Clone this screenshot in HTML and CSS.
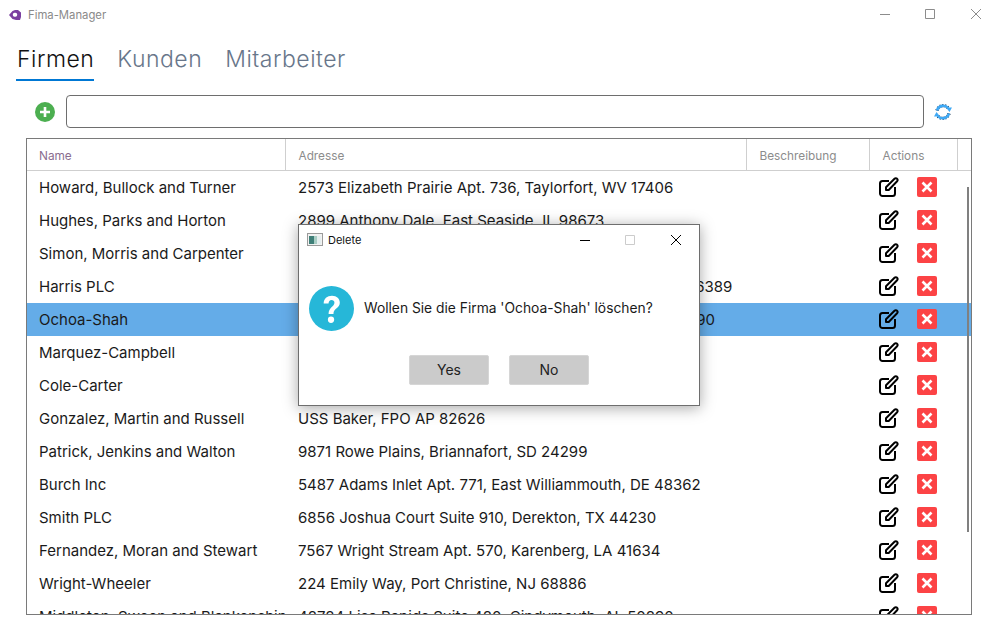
FILE: index.html
```html
<!DOCTYPE html>
<html lang="de">
<head>
    <meta charset="UTF-8">
    <meta name="viewport" content="width=device-width, initial-scale=1.0">
    <title>Fima-Manager</title>
    <link rel="stylesheet" href="styles.css">
</head>
<body>

<svg class="icon-defs" width="0" height="0">
    <symbol id="icon-edit" viewBox="0 0 20 20">
        <path d="M10 4H3.500A2.500 2.500 0 0 0 1 6.500v10A2.500 2.500 0 0 0 3.500 19h10a2.500 2.500 0 0 0 2.500-2.500V10" fill="none" stroke="#000" stroke-width="2"/>
        <path d="M7 13v-2.800L15.500 1.700a1.800 1.800 0 0 1 2.600 0 1.800 1.800 0 0 1 0 2.600L9.700 13z" fill="none" stroke="#000" stroke-width="2" stroke-linejoin="round"/>
    </symbol>
    <symbol id="icon-delete" viewBox="0 0 20 20">
        <rect width="20" height="20" rx="2" fill="#fc4345"/>
        <path d="M5.500 5.500l9 9M14.500 5.500l-9 9" stroke="#fff" stroke-width="2.600"/>
    </symbol>
</svg>

<div class="titlebar">
    <svg class="app-logo" width="12" height="10" viewBox="0 0 12 10">
        <path d="M0 5 3.500 1 6 0h3l3 2.500V7l-1 3H7L3.500 9z" fill="#7b3fa0"/>
        <rect x="3.800" y="2.800" width="4.400" height="4" rx="1.800" fill="#fff"/>
    </svg>
    <span class="app-title">Fima-Manager</span>
    <div class="window-buttons">
        <svg width="140" height="12" viewBox="0 0 140 12">
            <path d="M20 5.500h10M65.500 0.500h9v9h-9zM111 0l10 10M121 0l-10 10" fill="none" stroke="#8c8c8c"/>
        </svg>
    </div>
</div>

<div class="tabs">
    <span class="tab active">Firmen</span>
    <span class="tab">Kunden</span>
    <span class="tab">Mitarbeiter</span>
</div>

<div class="search-row">
    <svg class="add-icon" width="20" height="20" viewBox="0 0 20 20">
        <circle cx="10" cy="10" r="10" fill="#4caf50"/>
        <path d="M10 5v10M5 10h10" stroke="#fff" stroke-width="2.600"/>
    </svg>
    <input type="text" class="search-input">
    <svg class="refresh-icon" width="18" height="18" viewBox="0 0 18 18">
        <path d="M3 7.500A6.500 6.500 0 0 1 14.200 5" fill="none" stroke="#17324d" stroke-width="3.400" stroke-dasharray="1 1.500"/>
        <path d="M15 10.500A6.500 6.500 0 0 1 3.800 13" fill="none" stroke="#17324d" stroke-width="3.400" stroke-dasharray="1 1.500"/>
        <path d="M3 7.500A6.500 6.500 0 0 1 14.200 5" fill="none" stroke="#3fa9f5" stroke-width="2.600"/>
        <path d="M15 10.500A6.500 6.500 0 0 1 3.800 13" fill="none" stroke="#3fa9f5" stroke-width="2.600"/>
        <path d="M12 4.500h6L15.500 9zM6 13.500H0L2.500 9z" fill="#3fa9f5"/>
    </svg>
</div>

<div class="table-frame">
    <table class="company-table">
        <colgroup>
            <col class="col-name"><col class="col-address"><col class="col-desc"><col class="col-actions"><col>
        </colgroup>
        <thead>
            <tr><th class="name-head">Name</th><th>Adresse</th><th>Beschreibung</th><th>Actions</th><th></th></tr>
        </thead>
        <tbody id="company-body"></tbody>
    </table>
    <div class="scrollbar"></div>
</div>

<div class="dialog">
    <div class="dialog-title">
        <svg width="16" height="13" viewBox="0 0 16 13">
            <rect x="0.500" y="0.500" width="15" height="12" fill="#f2f2f2" stroke="#9a9a9a"/>
            <rect x="2" y="3" width="5" height="8" fill="#3f7f78"/>
            <rect x="7" y="3" width="3" height="8" fill="#a9cdc4"/>
            <rect x="10" y="3" width="4" height="8" fill="#e4eeee"/>
        </svg>
        <span>Delete</span>
        <svg class="dialog-buttons" width="112" height="12" viewBox="0 0 112 12">
            <path d="M0 6.500h10" stroke="#000"/>
            <path d="M45.500 1.500h9v9h-9z" fill="none" stroke="#ccc"/>
            <path d="M91 1l10 10M101 1l-10 10" stroke="#000"/>
        </svg>
    </div>
    <div class="dialog-message">
        <svg width="45" height="45" viewBox="0 0 46 46">
            <circle cx="23" cy="23" r="23" fill="#26b7d8"/>
            <path d="M15 18c0-5 3.500-8 8.500-8s8 3 8 7c0 5.500-6.500 5.500-6.500 11.500h-5c0-7 6-7.500 6-11.500 0-1.700-1.200-2.800-3-2.800s-3 1.400-3 3.800z" fill="#fff"/>
            <circle cx="22.500" cy="34.500" r="3.200" fill="#fff"/>
        </svg>
        <span>Wollen Sie die Firma 'Ochoa-Shah' löschen?</span>
    </div>
    <div class="dialog-actions">
        <button>Yes</button>
        <button>No</button>
    </div>
</div>

<script>
    const companies = [
        ['Howard, Bullock and Turner', '2573 Elizabeth Prairie Apt. 736, Taylorfort, WV 17406'],
        ['Hughes, Parks and Horton', '2899 Anthony Dale, East Seaside, IL 98673'],
        ['Simon, Morris and Carpenter', '418 Nelson Mills, Port Angela, OH 30251'],
        ['Harris PLC', '70152 Kimberly Crossroad Suite 348, North Jesse, MN 16389'],
        ['Ochoa-Shah', '3361 Christopher Harbor Apt. 205, South Marks, OR 52790'],
        ['Marquez-Campbell', '915 Dean Lodge, Lake Tanya, KS 61847'],
        ['Cole-Carter', '66 Rivera Ports, Hallton, VT 07412'],
        ['Gonzalez, Martin and Russell', 'USS Baker, FPO AP 82626'],
        ['Patrick, Jenkins and Walton', '9871 Rowe Plains, Briannafort, SD 24299'],
        ['Burch Inc', '5487 Adams Inlet Apt. 771, East Williammouth, DE 48362'],
        ['Smith PLC', '6856 Joshua Court Suite 910, Derekton, TX 44230'],
        ['Fernandez, Moran and Stewart', '7567 Wright Stream Apt. 570, Karenberg, LA 41634'],
        ['Wright-Wheeler', '224 Emily Way, Port Christine, NJ 68886'],
        ['Middleton, Sween and Blankenship', '48784 Lisa Rapids Suite 480, Cindymouth, AL 50890']
    ];

    const body = document.getElementById('company-body');
    companies.forEach((company, index) => {
        const row = body.insertRow();
        if (index === 4) row.className = 'selected';
        row.innerHTML = `
            <td>${company[0]}</td>
            <td>${company[1]}</td>
            <td></td>
            <td class="actions">
                <div class="action-icons">
                    <svg width="20" height="20"><use href="#icon-edit"/></svg>
                    <svg width="20" height="20"><use href="#icon-delete"/></svg>
                </div>
            </td>
            <td></td>
        `;
    });
</script>

</body>
</html>
```
FILE: styles.css
```css
* {
    box-sizing: border-box;
}
html, body {
    height: 630px;
}
body {
    font-family: Inter, "Liberation Sans", sans-serif;
    margin: 0;
    background-color: #fff;
    color: #1a1a1a;
    overflow: hidden;
    position: relative;
}
svg {
    display: block;
}
.icon-defs {
    position: absolute;
}
.titlebar {
    height: 30px;
    display: flex;
    align-items: center;
    padding-left: 9px;
    position: relative;
}
.app-title {
    margin-left: 7px;
    font-size: 11.300px;
    color: #8a8a8a;
}
.window-buttons {
    margin-left: auto;
}
.tabs {
    display: flex;
    gap: 22px;
    padding: 12px 0 0 16px;
    height: 52px;
}
.tab {
    font-size: 23px;
    letter-spacing: 0.5px;
    font-weight: 300;
    line-height: 34px;
    height: 39px;
    color: #68768a;
    padding: 0 0 0 1px;
}
.tab.active {
    color: #111;
    border-bottom: 2px solid #0078d4;
}
.search-row {
    display: flex;
    align-items: center;
    height: 33px;
    margin-top: 13px;
    padding-left: 35px;
}
.search-input {
    width: 858px;
    height: 33px;
    margin-left: 11px;
    border: 1px solid #6e6e6e;
    border-radius: 4px;
    background-color: #fff;
}
.refresh-icon {
    margin-left: 10px;
}
.table-frame {
    position: relative;
    width: 946px;
    height: 477px;
    margin: 10px 0 0 26px;
    border: 1px solid #7a7a7a;
    overflow: hidden;
}
.company-table {
    width: 944px;
    border-collapse: collapse;
    table-layout: fixed;
}
.col-name {
    width: 258px;
}
.col-address {
    width: 461px;
}
.col-desc {
    width: 123px;
}
.col-actions {
    width: 88px;
}
th {
    height: 31px;
    padding: 3px 12px 0 13px;
    font-size: 11.800px;
    font-weight: 400;
    text-align: left;
    color: #8c8c8c;
    border-right: 1px solid #cfcfcf;
    border-bottom: 1px solid #cfcfcf;
}
th:last-child {
    border-right: none;
}
th.name-head {
    color: #8a6d8f;
    padding-left: 12px;
}
td {
    height: 33px;
    padding: 0 12px 0 13px;
    font-size: 15px;
    white-space: nowrap;
    overflow: hidden;
}
td:first-child {
    padding-left: 12px;
}
tr.selected td {
    background-color: #64ace8;
}
td.actions {
    padding: 0 0 0 10px;
}
.action-icons {
    display: flex;
    gap: 18px;
    height: 33px;
    padding-top: 6px;
}
.scrollbar {
    position: absolute;
    left: 940px;
    top: 48px;
    width: 2px;
    height: 345px;
    background-color: #808080;
}
.dialog {
    position: absolute;
    left: 298px;
    top: 224px;
    width: 402px;
    height: 182px;
    background-color: #fff;
    border: 1px solid #6e6e6e;
    box-shadow: 0 2px 14px rgba(0, 0, 0, 0.35);
}
.dialog-title {
    display: flex;
    align-items: center;
    height: 29px;
    padding-left: 8px;
    font-size: 11px;
    color: #111;
}
.dialog-title span {
    margin-left: 5px;
}
.dialog-buttons {
    margin-left: auto;
    margin-right: 7px;
}
.dialog-message {
    display: flex;
    align-items: center;
    height: 46px;
    margin-top: 31px;
    padding-left: 10px;
    font-size: 13.800px;
}
.dialog-message span {
    margin-left: 10px;
}
.dialog-actions {
    display: flex;
    gap: 20px;
    margin-top: 24px;
    padding-left: 110px;
}
.dialog-actions button {
    width: 80px;
    height: 30px;
    padding: 0 0 2px;
    font-family: inherit;
    font-size: 14px;
    color: #222;
    background-color: #cbcbcb;
    border: 1px solid #d6d6d6;
    border-radius: 2px;
}
```
